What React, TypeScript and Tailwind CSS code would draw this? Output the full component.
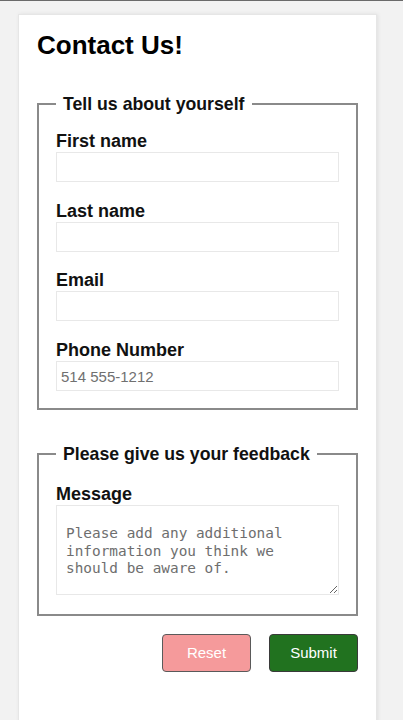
import React from 'react'

const sans = "font-['Liberation_Sans',Arial,sans-serif]"

const Field = ({ label, placeholder, first }: { label: string; placeholder?: string; first?: boolean }) => (
  <div className={first ? '' : 'mt-[17.7px]'}>
    <label className="block text-[18px] font-bold leading-[22px] text-[#111]">{label}</label>
    <input
      type="text"
      placeholder={placeholder}
      className="block w-full h-[30px] border border-[#e8e8e8] bg-white px-[4px] text-[15px] text-[#333] placeholder:text-[#707070] outline-none"
    />
  </div>
)

export default function App() {
  return (
    <div className={`min-h-[720px] bg-[#f2f2f2] border-t border-[#6a6a6a] ${sans}`}>
      <div className="ml-[18px] mt-[13px] w-[359px] min-h-[720px] bg-white border border-[#e6e6e6] shadow-[1px_0_4px_rgba(0,0,0,0.08)] px-[18px] pt-[14px]">
        <h1 className="text-[26px] font-bold leading-[32px] text-black">Contact Us!</h1>

        <form onSubmit={(e) => e.preventDefault()}>
          <fieldset className="mt-[32px] w-[321px] border-2 border-[#8a8a8a] px-[17px] pt-[15px] pb-[17px]">
            <legend className="px-[7px] text-[17.7px] font-bold leading-[22px] text-[#111]">
              Tell us about yourself
            </legend>
            <Field label="First name" first />
            <Field label="Last name" />
            <Field label="Email" />
            <Field label="Phone Number" placeholder="514 555-1212" />
          </fieldset>

          <fieldset className="mt-[33px] w-[321px] border-2 border-[#8a8a8a] px-[17px] pt-[18px] pb-[19px]">
            <legend className="px-[7px] text-[17.7px] font-bold leading-[22px] text-[#111]">
              Please give us your feedback
            </legend>
            <label className="block text-[18px] font-bold leading-[22px] text-[#111]">Message</label>
            <textarea
              placeholder="Please add any additional information you think we should be aware of."
              className="block w-full h-[90px] border border-[#e8e8e8] bg-white pl-[9px] pr-[40px] pt-[19px] font-['DejaVu_Sans_Mono',monospace] text-[14.4px] leading-[17.5px] text-[#333] placeholder:text-[#6e6e6e] outline-none"
            />
          </fieldset>

          <div className="mt-[18px] flex w-[321px] justify-end gap-[18px]">
            <button
              type="reset"
              className="h-[38px] w-[89px] rounded-[4px] border border-[#5a5a5a] bg-[#f59a9b] text-[15px] text-white"
            >
              Reset
            </button>
            <button
              type="submit"
              className="h-[38px] w-[89px] rounded-[4px] border border-[#3a3a3a] bg-[#21721f] text-[15px] text-white"
            >
              Submit
            </button>
          </div>
        </form>
      </div>
    </div>
  )
}
